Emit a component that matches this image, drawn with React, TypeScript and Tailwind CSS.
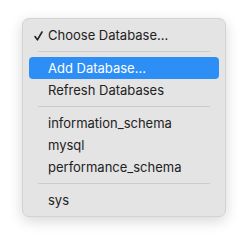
export default function App() {
  const Sep = () => <div className="mx-[15px] my-[5px] h-px bg-[#cbcbcb]" />

  const Item = ({ label, active, checked }: { label: string; active?: boolean; checked?: boolean }) => (
    <div
      className={`mx-[6px] flex h-[22px] items-center rounded-[4px] pt-px ${
        active ? 'bg-[#2d8ff6] text-white' : 'text-[#222222]'
      }`}
    >
      <span className="flex w-[19px] items-center pl-[5px]">
        {checked && (
          <svg width="9" height="10" viewBox="0 0 9 10" fill="none" stroke="currentColor" strokeWidth="1.6" strokeLinecap="round" strokeLinejoin="round">
            <path d="M1 5.6 L3.4 8.8 L8 1" />
          </svg>
        )}
      </span>
      <span>{label}</span>
    </div>
  )

  return (
    <div className="h-[243px] w-[248px] bg-white pl-[22px] pt-[18px]" style={{ fontFamily: 'Inter, "Liberation Sans", sans-serif' }}>
      <div className="w-[204px] rounded-[7px] border border-[#d3d3d3] bg-[#e4e4e4] py-[5px] text-[13px] shadow-[0_4px_14px_rgba(0,0,0,0.16)]">
        <Item label="Choose Database..." checked />
        <Sep />
        <Item label="Add Database..." active />
        <Item label="Refresh Databases" />
        <Sep />
        <Item label="information_schema" />
        <Item label="mysql" />
        <Item label="performance_schema" />
        <Sep />
        <Item label="sys" />
      </div>
    </div>
  )
}
